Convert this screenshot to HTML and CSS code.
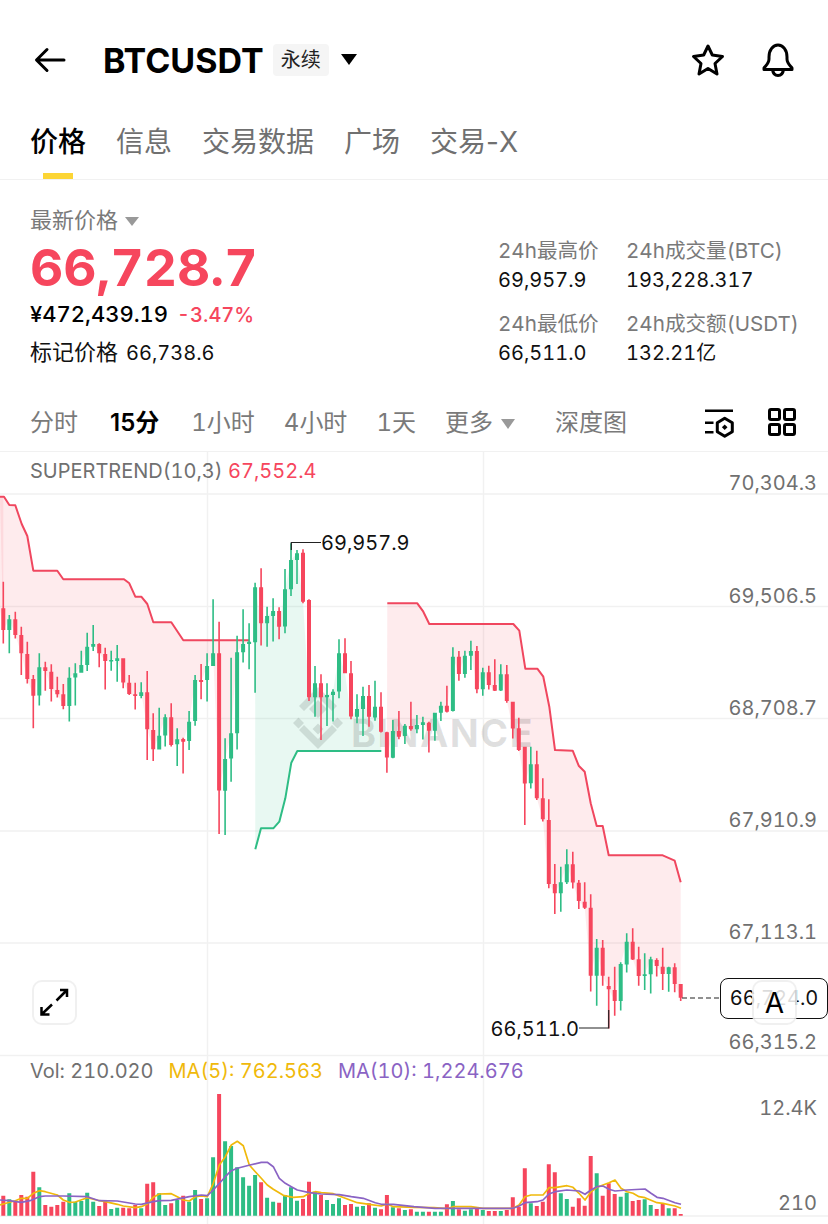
FILE: index.html
```html
<!DOCTYPE html>
<html lang="zh">
<head>
<meta charset="utf-8">
<title>BTCUSDT</title>
<link rel="stylesheet" href="styles.css">
</head>
<body>
<div class="app">
  <header class="topbar">
    <svg class="back" viewBox="0 0 32 26" width="32" height="26"><path d="M30 13H3M13 2.500L2.500 13L13 23.500"/></svg>
    <h1 class="symbol">BTCUSDT</h1>
    <span class="badge">永续</span>
    <span class="caret caret-lg"></span>
    <span class="spacer"></span>
    <svg class="ic star" viewBox="0 0 34 34" width="34" height="34"><path d="M17 3L21.300 12L31.500 13.500L24 20.500L26 31L17 25.500L8 31L10 20.500L2.500 13.500L12.700 12Z"/></svg>
    <svg class="ic bell" viewBox="0 0 34 36" width="34" height="36"><path d="M8 17V15C8 8 12 3 17 3S26 8 26 15V17C26 21 28.500 23 31 26V27.500H3V26C5.500 23 8 21 8 17ZM11.500 27.500C12 31.500 14 33.500 17 33.500S22 31.500 22.500 27.500"/></svg>
  </header>
  <nav class="tabs">
    <a class="tab active">价格</a>
    <a class="tab">信息</a>
    <a class="tab">交易数据</a>
    <a class="tab">广场</a>
    <a class="tab">交易-X</a>
  </nav>
  <section class="summary">
    <div class="main-price">
      <div class="latest">最新价格<span class="caret caret-gray"></span></div>
      <div class="price">66,728.7</div>
      <div class="cny"><span class="yen">¥472,439.19</span><span class="pct">-3.47%</span></div>
      <div class="mark">标记价格<span class="mark-val">66,738.6</span></div>
    </div>
    <div class="stats">
      <div class="stat"><span class="k">24h最高价</span><span class="v">69,957.9</span></div>
      <div class="stat"><span class="k">24h成交量(BTC)</span><span class="v">193,228.317</span></div>
      <div class="stat"><span class="k">24h最低价</span><span class="v">66,511.0</span></div>
      <div class="stat"><span class="k">24h成交额(USDT)</span><span class="v">132.21亿</span></div>
    </div>
  </section>
  <div class="frames">
    <span class="fr">分时</span>
    <span class="fr on">15分</span>
    <span class="fr">1小时</span>
    <span class="fr">4小时</span>
    <span class="fr">1天</span>
    <span class="fr more">更多<span class="caret caret-gray caret-more"></span></span>
    <span class="fr">深度图</span>
    <span class="spacer"></span>
    <svg class="ic tool-a" viewBox="0 0 30 32" width="30" height="32"><path class="thin" d="M0 4.700H28M0 16.700H8.500M0 26.300H8.500"/><path d="M19.700 12.300L27.300 16.800V25.800L19.700 30.300L12.300 25.800V16.800Z"/><path class="fill" d="M19.700 18.500L22.500 21.300L19.700 24.100L16.900 21.300Z"/></svg>
    <svg class="ic tool-b" viewBox="0 0 28 28" width="28" height="28"><rect x="1.500" y="1.500" width="10" height="10" rx="1.500"/><rect x="16.500" y="1.500" width="10" height="10" rx="1.500"/><rect x="1.500" y="16.500" width="10" height="10" rx="1.500"/><rect x="16.500" y="16.500" width="10" height="10" rx="1.500"/></svg>
  </div>
  <div class="chart">
    <svg id="plot" class="plot" width="828" height="772" viewBox="0 452 828 772"></svg>
    <div class="legend l-super">SUPERTREND(10,3) <span class="red">67,552.4</span></div>
    <div class="axis a1">70,304.3</div>
    <div class="axis a2">69,506.5</div>
    <div class="axis a3">68,708.7</div>
    <div class="axis a4">67,910.9</div>
    <div class="axis a5">67,113.1</div>
    <div class="axis a6">66,315.2</div>
    <div class="axis a7">12.4K</div>
    <div class="axis a8">210</div>
    <div class="extreme hi">69,957.9</div>
    <div class="extreme lo">66,511.0</div>
    <div class="legend l-vol"><span class="vol">Vol: 210.020</span><span class="ma5">MA(5): 762.563</span><span class="ma10">MA(10): 1,224.676</span></div>
    <div class="tag">66,724.0</div>
    <button class="float expand"><svg viewBox="0 0 30 30" width="30" height="30"><path d="M20 2H27V9M27 2L16.500 12.500M1.500 19V26.500H9.500M2 26L12 16.500"/></svg></button>
    <button class="float auto">A</button>
  </div>
</div>
<script src="chart.js"></script>
</body>
</html>
```
FILE: styles.css
```css
* { box-sizing: border-box; }
html, body { margin: 0; padding: 0; background: #fff; }
body { font-family: Inter, "Noto Sans CJK SC", sans-serif; color: #000; font-variant-numeric: tabular-nums; }
.app { width: 828px; height: 1224px; overflow: hidden; }
.spacer { flex: 1; }

.topbar { height: 120px; padding: 0 33px 0 34px; display: flex; align-items: center; }
.back { fill: none; stroke: #000; stroke-width: 3; stroke-linecap: round; stroke-linejoin: round; margin-right: 37px; }
.symbol { margin: 0; font-size: 34px; font-weight: 700; }
.badge { margin-left: 9px; width: 56px; height: 32px; background: #f5f5f5; border-radius: 4px; font-size: 20px; line-height: 32px; text-align: center; color: #222; }
.caret { display: inline-block; width: 0; height: 0; border-style: solid; border-color: transparent; border-bottom-width: 0; }
.caret-lg { margin-left: 12px; margin-top: -2px; border-width: 11px 8.500px 0; border-top-color: #000; }
.caret-gray { margin-left: 7px; vertical-align: 2px; border-width: 9px 7px 0; border-top-color: #999; }
.caret-more { margin-left: 8px; border-width: 10px 7.500px 0; }
.ic { fill: none; stroke: #000; stroke-width: 3; stroke-linejoin: round; }
.star { margin-right: 36px; }
.ic .fill { fill: #000; stroke: none; }
.ic .thin { stroke-width: 2.500; }

.tabs { height: 60px; padding: 1px 30px 0; display: flex; gap: 30px; border-bottom: 1px solid #f1f1f1; font-variant-numeric: normal; }
.tab { position: relative; font-size: 28px; line-height: 42px; color: #707070; height: 58px; }
.tab.active { color: #000; font-weight: 500; }
.tab.active::after { content: ""; position: absolute; left: 13px; bottom: 0; width: 30px; height: 6px; background: #fcd535; }

.summary { height: 212px; padding: 0 30px; display: flex; justify-content: space-between; }
.main-price { padding-top: 25px; }
.latest { font-size: 22px; line-height: 30px; color: #7a7a7a; }
.price { margin-top: 1px; font-size: 51.500px; line-height: 62px; font-weight: 700; color: #f6465d; }
.cny { margin-top: 1px; font-size: 22px; line-height: 30px; font-weight: 500; display: flex; gap: 9px; align-items: baseline; }
.pct { color: #f6465d; font-size: 20px; }
.mark { margin-top: 7px; font-size: 22px; line-height: 30px; color: #111; }
.mark-val { margin-left: 8px; font-size: 20px; }
.stats { padding-top: 56px; display: grid; grid-template-columns: 128px 172px; row-gap: 15px; align-content: start; }
.stat { display: flex; flex-direction: column; }
.k { font-size: 20.600px; line-height: 30px; color: #7a7a7a; white-space: nowrap; }
.v { font-size: 20px; line-height: 28px; color: #111; white-space: nowrap; }

.frames { height: 60px; padding: 0 32px 2px 30px; display: flex; align-items: center; border-bottom: 1px solid #f1f1f1; gap: 29px; }
.fr { font-size: 24px; color: #7a7a7a; white-space: nowrap; }
.fr.on { color: #000; font-weight: 600; margin: 0 3px; font-variant-numeric: proportional-nums; }
.more { margin-right: 11px; }
.tool-a { margin-top: 2px; margin-left: 1px; }
.tool-b { margin-left: 4px; margin-top: 2px; }

.chart { position: relative; width: 828px; height: 772px; }
.plot { position: absolute; left: 0; top: 0; display: block; }
.legend { position: absolute; left: 30px; font-size: 20px; line-height: 26px; color: #707070; white-space: nowrap; }
.l-super { top: 6px; }
.l-vol { top: 606px; display: flex; gap: 15px; }
.red { color: #f6465d; }
.ma5 { color: #f0b90b; }
.ma10 { color: #8a63c4; }
.axis { position: absolute; right: 11px; font-size: 20px; line-height: 26px; color: #707070; }
.a1 { top: 18px; } .a2 { top: 131px; } .a3 { top: 243px; } .a4 { top: 355px; }
.a5 { top: 467px; } .a6 { top: 577px; } .a7 { top: 643px; } .a8 { top: 738px; }
.extreme { position: absolute; font-size: 20px; line-height: 26px; color: #111; }
.hi { left: 321px; top: 78px; }
.lo { right: 249px; top: 564px; }
.tag { position: absolute; left: 720px; top: 526px; width: 108px; height: 41px; border: 1px solid #111; border-radius: 8px; background: #fff; font-size: 20px; line-height: 39px; text-align: center; color: #111; }
.float { position: absolute; width: 45px; height: 45px; padding: 0; border-radius: 10px; border: 2px solid rgba(0,0,0,.06); background: rgba(255,255,255,.85); display: flex; align-items: center; justify-content: center; font-family: inherit; color: #000; }
.expand { left: 32px; top: 528px; }
.expand svg { fill: none; stroke: #000; stroke-width: 2.500; }
.auto { left: 752px; top: 528px; font-size: 28px; }

/* chart marks */
.grid { stroke: #f1f1f1; stroke-width: 1.500; fill: none; }
.wm { fill: rgba(0,0,0,.12); font-family: Inter, sans-serif; font-weight: 700; font-size: 38px; letter-spacing: 1.400px; }
.wm-logo { fill: rgba(0,0,0,.12); }
.fill-r { fill: rgba(246,70,93,.11); }
.fill-g { fill: rgba(46,189,133,.11); }
.line-r { fill: none; stroke: #f0475f; stroke-width: 2; stroke-linejoin: round; }
.line-g { fill: none; stroke: #2ebd85; stroke-width: 2; stroke-linejoin: round; }
.c-r { fill: #f6465d; }
.c-g { fill: #2ebd85; }
.ma-y { fill: none; stroke: #f0b90b; stroke-width: 1.700; stroke-linejoin: round; }
.ma-p { fill: none; stroke: #8a63c4; stroke-width: 1.700; stroke-linejoin: round; }
.leader { fill: none; stroke: #222; stroke-width: 1.200; }
.dash { fill: none; stroke: #222; stroke-width: 1.200; stroke-dasharray: 5 3; }
```
FILE: chart.js
```js
// Candle rows: colour, wick top, body top, body bottom, wick bottom.
// Each block is given in 3x zoom units relative to its own y origin.
function rows(base, s) {
  return s.trim().split(/\s+/).map(function (t) {
    var p = t.split(",");
    return { c: p[0], wt: base + p[1] / 3, bt: base + p[2] / 3, bb: base + p[3] / 3, wb: base + p[4] / 3 };
  });
}
var candles = rows(480,
  "r,305,385,450,490 g,405,418,450,520 r,395,418,465,475 r,440,465,520,585 r,485,522,597,610 r,585,597,647,745 " +
  "g,520,562,647,677 r,545,562,573,632 r,553,575,627,665 r,590,630,643,652 r,612,643,678,688 g,562,593,678,725 " +
  "g,550,580,593,677 g,512,555,578,578 g,458,500,555,573 g,435,492,500,513 r,490,492,520,562 r,503,522,543,628 " +
  "g,512,540,543,572 g,495,535,543,605 r,535,535,608,625 r,585,608,642,645 r,608,643,648,688 g,607,637,648,655 " +
  "r,573,637,748,840 r,700,750,808,843 g,683,767,808,808 g,703,712,767,800 r,670,712,795,800 g,745,778,793,858 " +
  "r,773,777,785,880 g,693,725,783,810 g,585,600,723,737 r,552,600,606,658 g,520,558,600,665 g,358,520,558,558 " +
  "r,425,520,932,1062 g,775,837,932,1065 g,533,760,836,905 g,467,517,760,808 g,388,492,517,548 g,430,485,492,568 " +
  "g,308,322,487,638 r,265,322,430,497 g,380,408,430,500 g,355,393,408,485 r,382,393,440,478 g,267,328,440,460 " +
  "g,190,240,328,348").concat(rows(520,
  "g,90,100,120,192 r,88,98,245,250 r,238,240,532,543 g,438,490,532,590 r,463,490,532,660 g,490,525,532,618 " +
  "g,508,515,525,605 g,358,400,515,535 r,355,400,460,460 r,423,460,590,598 g,523,567,590,610 g,500,528,567,648 " +
  "r,495,528,590,620 g,482,560,592,602 r,517,560,635,638 r,635,637,713,758 g,600,633,713,715 r,573,633,650,658 " +
  "g,612,617,648,672 r,545,618,628,632 g,585,615,628,640 g,590,607,615,658 r,605,608,632,697 g,578,578,632,662 " +
  "g,545,557,578,603 r,497,557,575,577 g,382,410,573,575 r,393,410,462,482 g,392,407,462,473 g,362,393,407,450 " +
  "r,378,393,508,520 g,443,457,508,527 r,437,457,495,508 r,418,495,512,513 g,433,463,512,513 r,435,463,543,548 " +
  "r,545,545,625,655 r,593,625,690,693")).concat(rows(700,
  "r,140,140,250,375 g,140,193,250,265 r,152,193,295,300 r,235,295,358,365 r,298,360,552,565 r,492,552,580,642 " +
  "g,500,547,580,635 g,448,493,547,552 r,455,493,548,565 r,540,548,603,627 r,547,605,623,627 r,583,623,827,875 " +
  "g,717,743,827,917 r,720,743,827,857 r,830,858,868,985 r,800,870,903,947 g,787,792,903,932 g,700,725,793,818 " +
  "r,685,725,778,780 r,740,778,828,857 g,760,823,828,870 g,770,778,823,880 r,775,780,798,830 r,743,800,822,870 " +
  "g,800,802,822,875 r,790,802,852,877 r,852,852,893,903"));

var volTops = [437,448,455,435,440,365,412,465,470,465,455,430,455,453,428,455,468,455,477,473,473,475,465,475,
  401,397,430,465,460,450,437,455,420,447,445,322,132,274,288,352,382,407,375,397,443,455,458,435,412,452,447,
  395,425,435,450,462,445,465,462,470,468,460,473,478,435,472,475,480,478,485,485,485,485,485,463,453,478,482,
  478,477,480,483,483,483,480,442,470,355,460,468,455,343,367,430,447,470,445,467,318,370,437,400,432,440,428,
  453,450,448,465,477,462,475,475,492];

var red1 = [[0,496.7],[4,496.7],[9.300,505],[15.300,505.300],[21.700,524],[27.300,536],[33.300,570.700],[57.300,570.700],
  [63.300,579.300],[124,579.300],[129.300,583.300],[135.300,596.700],[141.300,596.700],[147.300,604],[153.300,622.300],
  [171.300,622.300],[183.300,640.300],[249.300,640.300]];
var green1 = [[255.300,849.300],[261,828.300],[273.300,828.300],[279.300,821.700],[285.300,798.300],[291.300,762.700],
  [297.300,751],[381.300,751]];
var red2 = [[387.300,603.300],[417.300,603.300],[423.300,611.700],[429.300,624],[513.300,624],[519.300,630.700],
  [525.300,668.700],[537.300,668.700],[543.300,676.700],[549.300,706.700],[555,750],[572.700,750.700],[578.700,765.700],
  [584.700,771.700],[590.700,803.300],[596.700,826],[602.700,826],[608.700,855.300],[662.700,855.300],[674.700,860.700],
  [680.700,882.300]];

function zp(a, ox) {
  var out = [];
  for (var i = 0; i < a.length; i += 2) out.push([(ox || 0) + a[i] / 3, 1050 + a[i + 1] / 3]);
  return out;
}
var ma5 = zp([0,465,18,460,46,452,64,445,82,445,100,430,118,422,136,425,172,435,190,450,208,457,226,456,262,443,298,452,
  316,455,352,463,370,468,406,473,424,470,442,462,460,442,478,432,514,431,532,440,550,450,568,453,586,440,604,438,622,440,
  640,400,658,345,676,320,694,285,712,274,730,287,748,345,766,365,784,385,802,405,820,418,850,436,880,442,910,440,928,430,
  946,425,964,428,1000,431,1036,445,1072,458,1108,463,1144,468,1162,462,1180,470,1242,472]).concat(zp([60,473,99,476,117,470,
  171,470,207,475,297,475,315,465,333,440,351,435,387,435,405,413,423,413,459,407,477,412,495,430,513,450,531,425,549,412,
  585,398,603,390,621,415,639,425,657,430,675,440,693,443,729,458,747,460,783,468,801,475], 414));
var ma10 = zp([0,450,28,452,64,457,90,452,118,440,136,438,190,438,262,440,298,452,352,453,406,462,424,463,460,455,478,452,
  514,451,568,440,604,435,622,437,640,420,676,380,694,362,712,355,750,345,784,337,802,337,820,350,838,385,856,400,874,410,
  892,420,928,428,964,432,1018,434,1054,440,1090,445,1126,458,1144,463,1180,463,1242,470]).concat(zp([63,475,297,475,315,468,
  333,458,369,455,387,450,405,432,423,425,459,420,495,423,513,433,531,420,549,410,567,408,585,418,603,423,639,420,693,417,
  711,430,729,442,747,445,783,458,801,463], 414));

var X0 = 3.33, DX = 5.994;
function cx(i) { return X0 + i * DX; }
function close(c) { return c.c === "g" ? c.bt : c.bb; }
function pts(a) { return a.map(function (p) { return p[0].toFixed(1) + "," + p[1].toFixed(1); }).join(" "); }
function band(line, from, to) {
  var back = [];
  for (var i = to; i >= from; i--) back.push([cx(i), close(candles[i])]);
  return pts(line.concat(back));
}
function box(x, y, w, h) { return "M" + x.toFixed(1) + " " + y.toFixed(1) + "h" + w + "v" + h.toFixed(1) + "h-" + w + "z"; }

var wicks = { r: "", g: "" }, bodies = { r: "", g: "" }, vols = { r: "", g: "" };
candles.forEach(function (c, i) {
  var x = cx(i);
  wicks[c.c] += box(x - 0.8, c.wt, 1.6, c.wb - c.wt);
  bodies[c.c] += box(x - 2, c.bt, 4, Math.max(1.5, c.bb - c.bt));
  var top = 1050 + volTops[i] / 3;
  vols[c.c] += box(x - 2, top, 4, 1215.7 - top);
});

var html = "";
[494, 606.5, 718.5, 831, 943, 1055.5, 1216].forEach(function (y) {
  html += '<path class="grid" d="M0 ' + y + 'H828"/>';
});
[207.5, 483.5].forEach(function (x) {
  html += '<path class="grid" d="M' + x + ' 452V1224"/>';
});
html += '<path class="wm-logo" d="M318 709l9 9-9 9-9-9zM318 706l-14 14-5-5 19-19 19 19-5 5zM304 732l-5.500 5.500-5.500-5.500 5.500-5.500zM343 732l-5.500 5.500-5.500-5.500 5.500-5.500zM318 732.500l5.500 5.500-5.500 5.500-5.500-5.500zM318 758l-19-19 5-5 14 14 14-14 5 5z" transform="translate(0 -9)"/>';
html += '<polygon class="fill-r" points="' + band(red1, 0, 41) + '"/>';
html += '<polygon class="fill-r" points="0,496.700 0,610 3.300,630 3.300,496.700"/>';
html += '<polygon class="fill-g" points="' + band(green1, 42, 63) + '"/>';
html += '<polygon class="fill-r" points="' + band(red2, 64, 113) + '"/>';
html += '<text class="wm" x="351" y="747">BINANCE</text>';
html += '<polyline class="line-r" points="' + pts(red1) + '"/>';
html += '<polyline class="line-g" points="' + pts(green1) + '"/>';
html += '<polyline class="line-r" points="' + pts(red2) + '"/>';
["g", "r"].forEach(function (k) {
  html += '<path class="c-' + k + '" d="' + wicks[k] + bodies[k] + '"/>';
  html += '<path class="c-' + k + '" d="' + vols[k] + '"/>';
});
html += '<polyline class="ma-y" points="' + pts(ma5) + '"/>';
html += '<polyline class="ma-p" points="' + pts(ma10) + '"/>';
html += '<path class="leader" d="M291.300 550V542.500H321M608.700 1010V1028H579"/>';
html += '<path class="dash" d="M682 998H720"/>';
document.getElementById("plot").innerHTML = html;
```
